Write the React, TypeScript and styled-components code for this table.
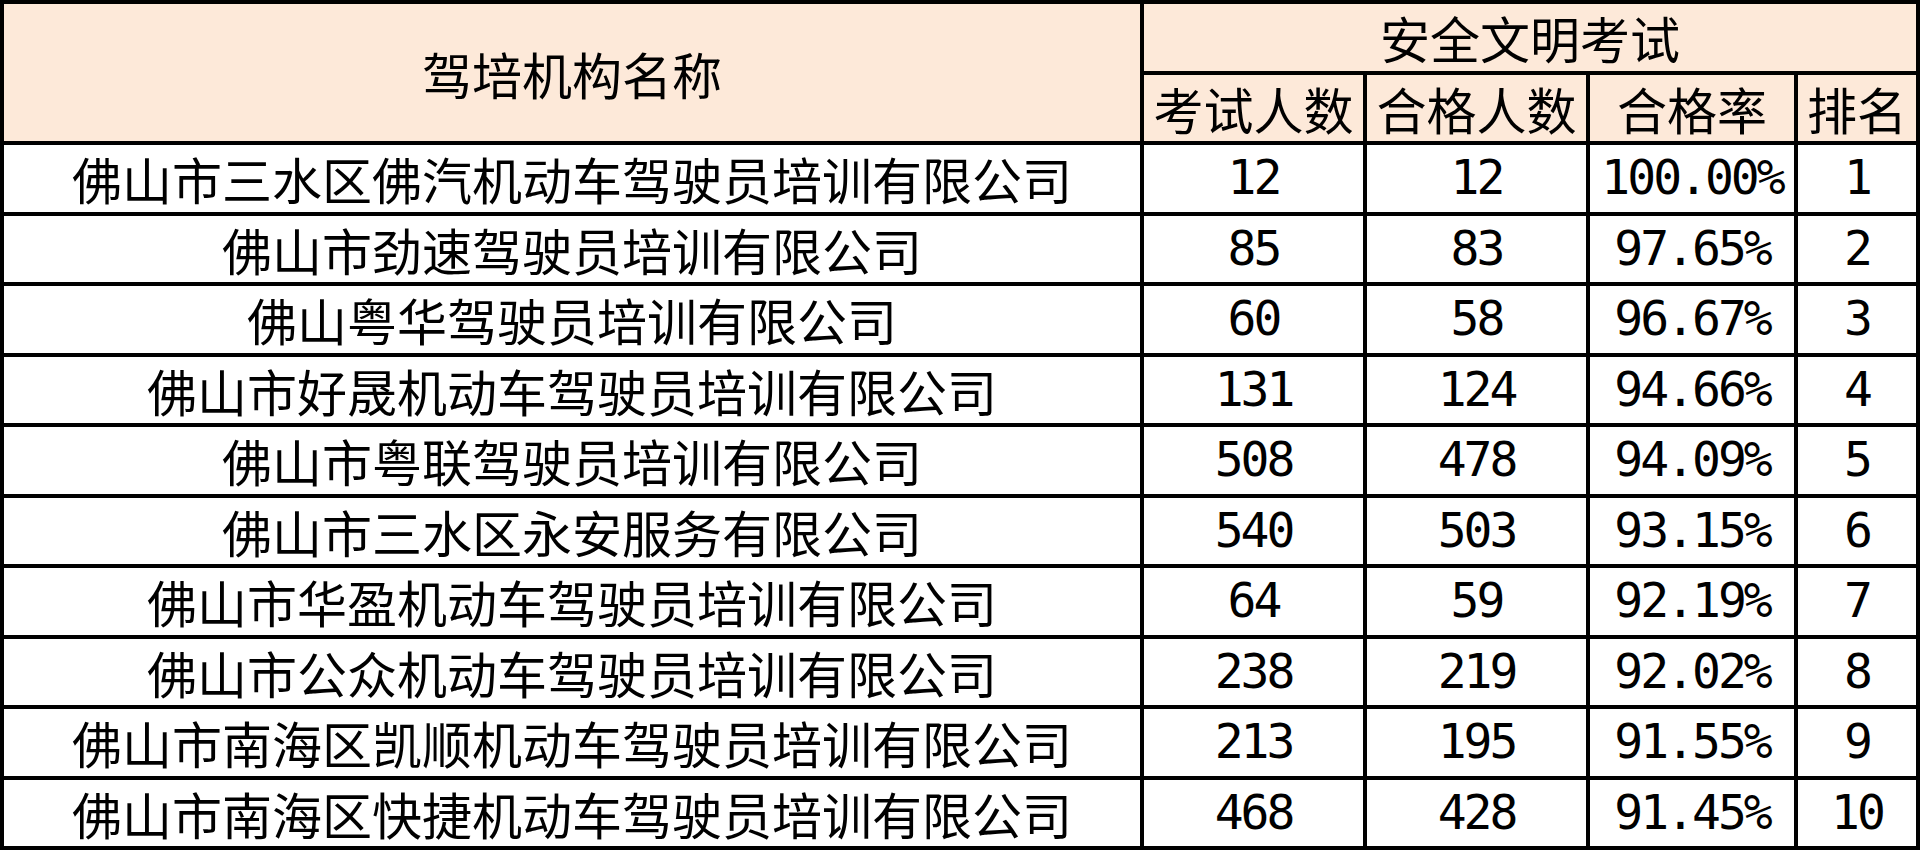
import React from "react";
import styled, { createGlobalStyle } from "styled-components";

interface SchoolRow {
  name: string;
  tested: number;
  passed: number;
  rate: string;
  rank: number;
}

const rows: SchoolRow[] = [
  { name: "佛山市三水区佛汽机动车驾驶员培训有限公司", tested: 12, passed: 12, rate: "100.00%", rank: 1 },
  { name: "佛山市劲速驾驶员培训有限公司", tested: 85, passed: 83, rate: "97.65%", rank: 2 },
  { name: "佛山粤华驾驶员培训有限公司", tested: 60, passed: 58, rate: "96.67%", rank: 3 },
  { name: "佛山市好晟机动车驾驶员培训有限公司", tested: 131, passed: 124, rate: "94.66%", rank: 4 },
  { name: "佛山市粤联驾驶员培训有限公司", tested: 508, passed: 478, rate: "94.09%", rank: 5 },
  { name: "佛山市三水区永安服务有限公司", tested: 540, passed: 503, rate: "93.15%", rank: 6 },
  { name: "佛山市华盈机动车驾驶员培训有限公司", tested: 64, passed: 59, rate: "92.19%", rank: 7 },
  { name: "佛山市公众机动车驾驶员培训有限公司", tested: 238, passed: 219, rate: "92.02%", rank: 8 },
  { name: "佛山市南海区凯顺机动车驾驶员培训有限公司", tested: 213, passed: 195, rate: "91.55%", rank: 9 },
  { name: "佛山市南海区快捷机动车驾驶员培训有限公司", tested: 468, passed: 428, rate: "91.45%", rank: 10 },
];

// column widths in px, each includes its right border
const columns = [1140, 223, 223, 208, 122];

const App: React.FC = () => {
  return (
    <>
      <GlobalStyle />
      <Sheet>
        <colgroup>
          {columns.map((w, i) => (
            <col key={i} style={{ width: w }} />
          ))}
        </colgroup>
        <thead>
          <Row>
            <HeadCell rowSpan={2}>驾培机构名称</HeadCell>
            <HeadCell colSpan={4}>安全文明考试</HeadCell>
          </Row>
          <Row>
            <HeadCell>考试人数</HeadCell>
            <HeadCell>合格人数</HeadCell>
            <HeadCell>合格率</HeadCell>
            <HeadCell>排名</HeadCell>
          </Row>
        </thead>
        <tbody>
          {rows.map((r) => (
            <Row key={r.rank}>
              <NameCell>{r.name}</NameCell>
              <NumCell>{r.tested}</NumCell>
              <NumCell>{r.passed}</NumCell>
              <NumCell>{r.rate}</NumCell>
              <NumCell>{r.rank}</NumCell>
            </Row>
          ))}
        </tbody>
      </Sheet>
    </>
  );
};

export default App;

//MARK: - Styled Components

const GlobalStyle = createGlobalStyle`
  html, body {
    margin: 0;
    padding: 0;
    background: #ffffff;
    overflow: hidden;
  }
`;

const Sheet = styled.table`
  box-sizing: border-box;
  width: 1920px;
  height: 850px;
  table-layout: fixed;
  border-collapse: separate;
  border-spacing: 0;
  border-top: 4px solid #000;
  border-left: 4px solid #000;
  color: #000;
  font-family: "Noto Sans CJK SC", sans-serif;
`;

const Row = styled.tr`
  height: 70.5px;
`;

const BaseCell = styled.td`
  box-sizing: border-box;
  border-right: 4px solid #000;
  border-bottom: 4px solid #000;
  padding: 0;
  text-align: center;
  vertical-align: middle;
  line-height: 1.2;
  white-space: nowrap;
`;

const HeadCell = styled(BaseCell).attrs({ as: "th" })`
  background: #fde9d9;
  font-weight: normal;
  font-size: 50px;
`;

const NameCell = styled(BaseCell)`
  font-size: 50px;
`;

const NumCell = styled(BaseCell)`
  font-family: "DejaVu Sans Mono", monospace;
  font-size: 48px;
  letter-spacing: -3px;
`;
